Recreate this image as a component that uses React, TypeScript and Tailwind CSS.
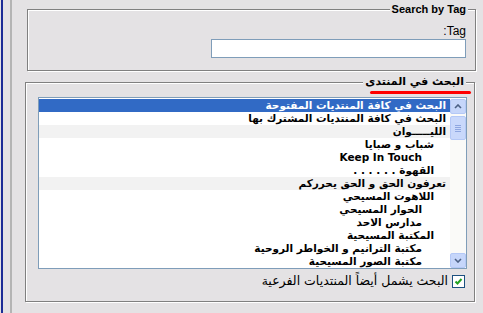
import React from 'react';

interface Forum {
    title: string;
    level: number;
    category?: boolean;
}

const forums: Forum[] = [
    { title: 'البحث في كافة المنتديات المفتوحة', level: 0 },
    { title: 'البحث في كافة المنتديات المشترك بها', level: 0 },
    { title: 'الليـــــوان', level: 0, category: true },
    { title: 'شباب و صبايا', level: 1 },
    { title: 'Keep In Touch', level: 2 },
    { title: 'القهوة . . . . . .', level: 1 },
    { title: 'تعرفون الحق و الحق يحرركم', level: 0, category: true },
    { title: 'اللاهوت المسيحي', level: 1 },
    { title: 'الحوار المسيحي', level: 2 },
    { title: 'مدارس الاحد', level: 2 },
    { title: 'المكتبة المسيحية', level: 1 },
    { title: 'مكتبة الترانيم و الخواطر الروحية', level: 2 },
    { title: 'مكتبة الصور المسيحية', level: 2 },
];

const indent = ['pr-[4px]', 'pr-[16px]', 'pr-[28px]'];

const ScrollButton: React.FC<{ down?: boolean }> = ({ down }) => (
    <div className="h-[15px] w-[16px] rounded-[2px] border border-[#b4c8f6] bg-[#c6d6fa] flex items-center justify-center">
        <svg width="8" height="5" viewBox="0 0 8 5">
            <path d={down ? 'M1 1 L4 4 L7 1' : 'M1 4 L4 1 L7 4'} fill="none" stroke="#4d6185" strokeWidth="1.6" />
        </svg>
    </div>
);

export default function App() {
    return (
        <div className="w-[483px] h-[313px] bg-[#e4e2e4] flex overflow-hidden font-['Liberation_Sans','DejaVu_Sans',sans-serif] text-[11px] text-black">
            {/* window edge */}
            <div className="w-px" />
            <div className="w-[2px] bg-[#1c2c96]" />
            <div className="w-[7px]" />
            <div className="w-[2px] bg-[#b4b4b4]" />

            <div className="flex-1 flex flex-col">
                {/* Search by Tag */}
                <div className="relative mt-[9px] ml-[15px] w-[449px] h-[62px] border border-[#808080] shadow-[inset_1px_1px_0_#fff,1px_1px_0_#fff]">
                    <span className="absolute right-[7px] top-[-8px] px-[2px] bg-[#e4e2e4] font-bold leading-[14px]">Search by Tag</span>
                    <div className="flex flex-col items-end pr-[9px] pt-[15px]">
                        <span className="leading-[13px] text-[12px]">:Tag</span>
                        <div className="mt-[1px] w-[255px] h-[19px] border border-[#7f9db9] bg-white" />
                    </div>
                </div>

                {/* Forum search */}
                <div className="relative mt-[11px] ml-[13px] w-[450px] h-[220px] border border-[#808080] shadow-[inset_1px_1px_0_#fff,1px_1px_0_#fff]">
                    <span dir="rtl" className="absolute right-[8px] top-[-8px] px-[2px] bg-[#e4e2e4] font-bold leading-[14px] font-['DejaVu_Sans',sans-serif]">البحث في المنتدى</span>
                    <span className="absolute right-[3px] top-[8px] w-[101px] h-[3px] rounded-full bg-[#ff0000]" />

                    <div className="ml-[12px] mt-[14px] w-[429px] h-[172px] border border-[#7f9db9] bg-white pt-px flex overflow-hidden">
                        <div dir="rtl" className="flex-1 flex flex-col">
                            {forums.map((f, i) => (
                                <div
                                    key={i}
                                    className={`h-[13px] shrink-0 leading-[13px] font-bold whitespace-nowrap text-right font-['DejaVu_Sans',sans-serif] text-[10.5px] ${indent[f.level]} ${i === 0 ? 'bg-[#316ac5] text-white' : f.category ? 'bg-[#f2f2f2]' : ''}`}
                                >
                                    {f.title}
                                </div>
                            ))}
                        </div>
                        <div className="w-[16px] flex flex-col bg-[#fafaf8]">
                            <ScrollButton />
                            <div className="mt-[2px] h-[24px] w-[16px] rounded-[2px] border border-[#b4c8f6] bg-[#c9d8fb] flex flex-col items-center justify-center gap-[1px]">
                                <div className="w-[6px] h-px bg-[#8ea6e0]" />
                                <div className="w-[6px] h-px bg-[#8ea6e0]" />
                                <div className="w-[6px] h-px bg-[#8ea6e0]" />
                                <div className="w-[6px] h-px bg-[#8ea6e0]" />
                            </div>
                            <div className="flex-1" />
                            <ScrollButton down />
                        </div>
                    </div>

                    <div dir="rtl" className="mt-[5px] mr-[9px] flex items-center gap-[4px]">
                        <div className="w-[13px] h-[13px] border border-[#1c5180] bg-white flex items-center justify-center">
                            <svg width="9" height="9" viewBox="0 0 9 9">
                                <path d="M1.5 4.5 L3.5 6.5 L7.5 2" fill="none" stroke="#21a121" strokeWidth="2" />
                            </svg>
                        </div>
                        <span className="font-['DejaVu_Sans',sans-serif] text-[12.5px] leading-[14px]">البحث يشمل أيضاً المنتديات الفرعية</span>
                    </div>
                </div>
            </div>
        </div>
    );
}
